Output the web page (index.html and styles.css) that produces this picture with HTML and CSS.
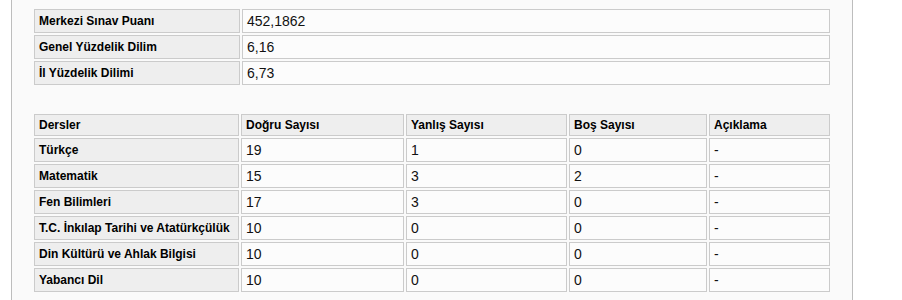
FILE: index.html
```html
<!DOCTYPE html>
<html lang="tr">
<head>
<meta charset="utf-8">
<title>Sınav Sonucu</title>
<link rel="stylesheet" href="styles.css">
</head>
<body>
<div class="panel">
  <table class="grid summary">
    <tbody>
      <tr><th class="c-label">Merkezi Sınav Puanı</th><td class="c-value">452,1862</td></tr>
      <tr><th class="c-label">Genel Yüzdelik Dilim</th><td class="c-value">6,16</td></tr>
      <tr><th class="c-label">İl Yüzdelik Dilimi</th><td class="c-value">6,73</td></tr>
    </tbody>
  </table>

  <table class="grid lessons">
    <thead>
      <tr>
        <th class="c-ders">Dersler</th>
        <th class="c-dogru">Doğru Sayısı</th>
        <th class="c-yanlis">Yanlış Sayısı</th>
        <th class="c-bos">Boş Sayısı</th>
        <th class="c-aciklama">Açıklama</th>
      </tr>
    </thead>
    <tbody>
      <tr><th>Türkçe</th><td>19</td><td>1</td><td>0</td><td>-</td></tr>
      <tr><th>Matematik</th><td>15</td><td>3</td><td>2</td><td>-</td></tr>
      <tr><th>Fen Bilimleri</th><td>17</td><td>3</td><td>0</td><td>-</td></tr>
      <tr><th>T.C. İnkılap Tarihi ve Atatürkçülük</th><td>10</td><td>0</td><td>0</td><td>-</td></tr>
      <tr><th>Din Kültürü ve Ahlak Bilgisi</th><td>10</td><td>0</td><td>0</td><td>-</td></tr>
      <tr><th>Yabancı Dil</th><td>10</td><td>0</td><td>0</td><td>-</td></tr>
    </tbody>
  </table>
</div>
</body>
</html>
```

FILE: styles.css
```css
html, body {
  margin: 0;
  padding: 0;
  background: #ffffff;
}

body {
  font-family: "Liberation Sans", Arial, sans-serif;
  font-size: 14px;
  color: #000;
}

.panel {
  margin-left: 11px;
  width: 840px;
  min-height: 300px;
  background: #fafafa;
  border-left: 1px solid #bdbdbd;
  border-right: 1px solid #bdbdbd;
  padding-top: 7px;
  box-sizing: content-box;
}

.grid {
  border-collapse: separate;
  border-spacing: 2px;
  table-layout: fixed;
  width: 800px;
  margin-left: 20px;
}

.grid th,
.grid td {
  box-sizing: border-box;
  border: 1px solid #cbcbcb;
  height: 24px;
  padding: 3px 4px;
  line-height: 16px;
  text-align: left;
  vertical-align: middle;
  white-space: nowrap;
  overflow: hidden;
}

.grid th {
  background: #eeeeee;
  font-size: 12px;
  font-weight: bold;
  color: #000;
}

.grid td {
  background: #fcfcfc;
  font-size: 14px;
  font-weight: normal;
  color: #111;
}

.summary .c-label { width: 206px; }
.summary .c-value { width: 588px; }

.lessons {
  margin-top: 25px;
}

.lessons thead th {
  height: 22px;
  padding-top: 2px;
  padding-bottom: 2px;
  line-height: 16px;
}

.lessons .c-ders { width: 205px; }
.lessons .c-dogru { width: 163px; }
.lessons .c-yanlis { width: 161px; }
.lessons .c-bos { width: 138px; }
.lessons .c-aciklama { width: 121px; }
```
